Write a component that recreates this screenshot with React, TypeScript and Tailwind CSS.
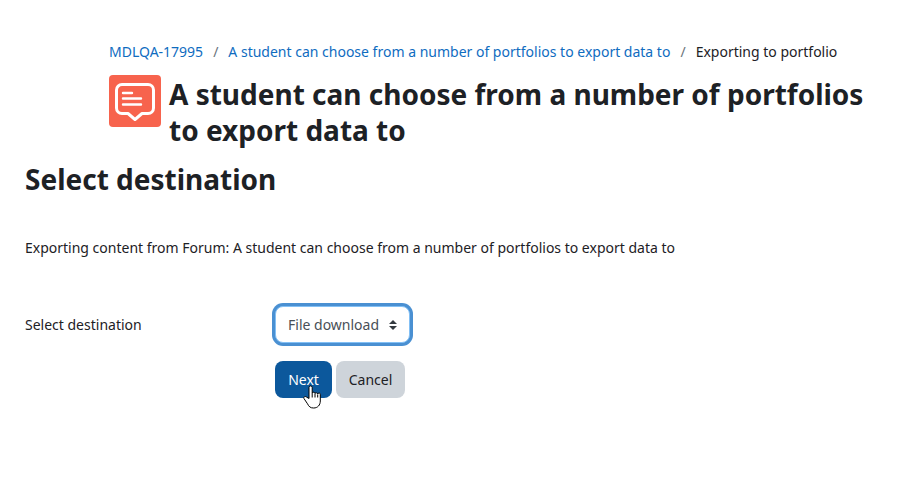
import { useState } from 'react'

const ACTIVITY = 'A student can choose from a number of portfolios to export data to'

function ForumIcon() {
  return (
    <span className="flex w-13 h-13 shrink-0 items-center justify-center rounded-sm bg-[#f7634d]">
      <svg viewBox="0 0 40 40" className="w-10 h-10" fill="none" stroke="white" strokeWidth="3"
        strokeLinejoin="round" strokeLinecap="round" aria-hidden="true">
        <path d="M7 3.500h26a5.500 5.500 0 0 1 5.500 5.500v18a5.500 5.500 0 0 1-5.500 5.500h-6L20 38.500l-7-6H7A5.500 5.500 0 0 1 1.500 27V9A5.500 5.500 0 0 1 7 3.500Z" />
        <path d="M8 12h9M8 17.500h18M8 23.500h18" strokeWidth="2.400" />
      </svg>
    </span>
  )
}

function HandCursor() {
  return (
    <svg viewBox="0 0 18 24" className="pointer-events-none absolute top-6 left-7 w-[18px] h-6" aria-hidden="true">
      <path
        d="M6 13.500V2.500a1.600 1.600 0 0 1 3.200 0V8a1.500 1.500 0 0 1 2.800.400 1.500 1.500 0 0 1 2.700.700 1.300 1.300 0 0 1 2.600.600v6.300c0 4-2.600 7-6.600 7-3.400 0-4.700-1.300-6.200-4.200L1 13.600c-.9-1.700 1.400-2.800 2.600-1.500Z"
        fill="white" stroke="black" strokeWidth="1" strokeLinejoin="round"
      />
      <path d="M9.200 8v4.500M12 8.500v4M14.700 9.500v3" stroke="black" strokeWidth="1" />
    </svg>
  )
}

export default function App() {
  const [instance, setInstance] = useState('file')

  return (
    <main className="px-[25px] pt-10 pb-10 font-['Noto_Sans',sans-serif] text-sm text-[#1d2125]">
      <header className="pl-[84px]">
        <nav aria-label="Breadcrumb">
          <ol className="flex h-6 items-center whitespace-nowrap">
            <li><a href="#course" className="text-[#0f6cbf] hover:underline">MDLQA-17995</a></li>
            <li className="px-2.5 text-[#6a737b]" aria-hidden="true">/</li>
            <li><a href="#activity" className="text-[#0f6cbf] hover:underline">{ACTIVITY}</a></li>
            <li className="px-2.5 text-[#6a737b]" aria-hidden="true">/</li>
            <li aria-current="page">Exporting to portfolio</li>
          </ol>
        </nav>
        <div className="mt-[11px] flex gap-2">
          <ForumIcon />
          <h1 className="pt-px text-[28px] leading-9 font-bold">{ACTIVITY}</h1>
        </div>
      </header>

      <h2 className="mt-[13px] text-[28px] leading-9 font-bold">Select destination</h2>
      <p className="mt-[39px] leading-6">Exporting content from Forum: {ACTIVITY}</p>

      <form onSubmit={e => e.preventDefault()} className="mt-[46px] grid grid-cols-[250px_1fr] items-center gap-y-[18px]">
        <label htmlFor="instance">Select destination</label>
        <div className="relative w-fit">
          <select
            id="instance"
            value={instance}
            onChange={e => setInstance(e.target.value)}
            className="block h-[37px] w-[135px] appearance-none rounded-lg border border-[#83c0f5] bg-white pl-3 text-[#495057] outline-none ring-3 ring-[#4a90d2]"
          >
            <option value="file">File download</option>
          </select>
          <svg viewBox="0 0 8 10" className="pointer-events-none absolute top-3.5 right-[13px] w-2 h-2.5" fill="#343a40" aria-hidden="true">
            <path d="M4 0 8 4H0ZM4 10 0 6h8Z" />
          </svg>
        </div>

        <div className="col-start-2 flex gap-1">
          <div className="relative">
            <button type="submit" className="h-[37px] w-[57px] rounded-lg bg-[#0c589c] text-white">Next</button>
            <HandCursor />
          </div>
          <button type="button" className="h-[37px] w-[69px] rounded-lg bg-[#ced4da]">Cancel</button>
        </div>
      </form>
    </main>
  )
}
